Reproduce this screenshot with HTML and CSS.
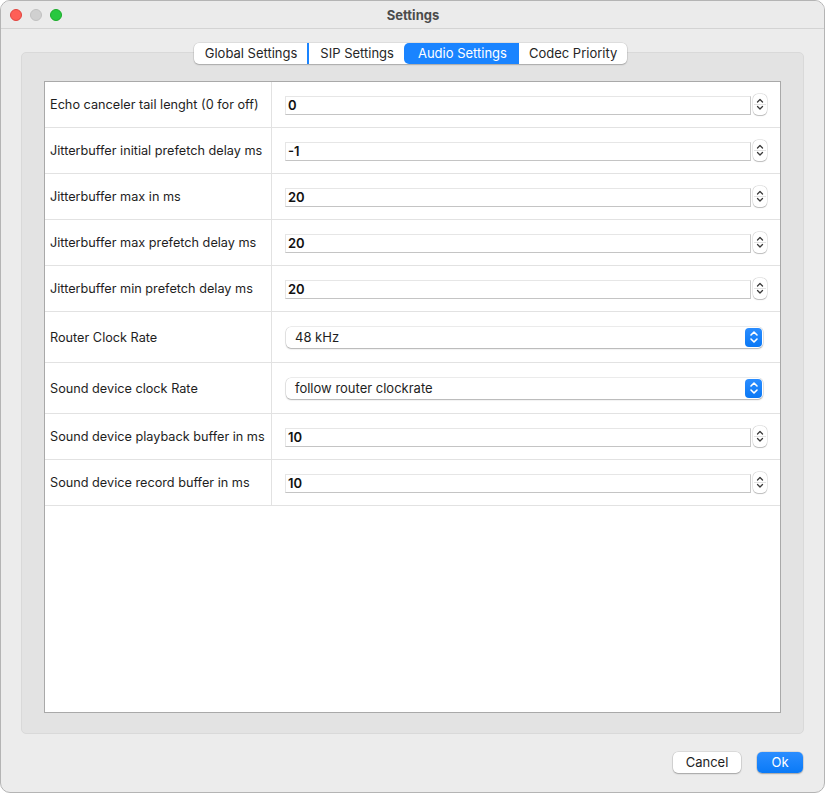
FILE: index.html
```html
<!DOCTYPE html>
<html>
<head>
<meta charset="utf-8">
<title>Settings</title>
<link rel="stylesheet" href="styles.css">
</head>
<body>
<div class="window">
  <div class="titlebar">
    <div class="lights">
      <span class="light red"></span>
      <span class="light grey"></span>
      <span class="light green"></span>
    </div>
    <div class="title">Settings</div>
    <div></div>
  </div>
  <div class="content">
    <div class="tabs">
      <div class="tab">Global Settings</div>
      <div class="tab mark">SIP Settings</div>
      <div class="tab active">Audio Settings</div>
      <div class="tab">Codec Priority</div>
    </div>
    <div class="group">
      <div class="table">
        <div class="row">
          <div class="label">Echo canceler tail lenght (0 for off)</div>
          <div class="cell"><div class="field">0</div><div class="stepper"><svg width="14" height="20" viewBox="0 0 14 20"><path d="M4.5 8 L7 5.5 L9.5 8" /><path d="M4.5 12.5 L7 15 L9.5 12.5" /></svg></div></div>
        </div>
        <div class="row">
          <div class="label">Jitterbuffer initial prefetch delay ms</div>
          <div class="cell"><div class="field">-1</div><div class="stepper"><svg width="14" height="20" viewBox="0 0 14 20"><path d="M4.5 8 L7 5.5 L9.5 8" /><path d="M4.5 12.5 L7 15 L9.5 12.5" /></svg></div></div>
        </div>
        <div class="row">
          <div class="label">Jitterbuffer max in ms</div>
          <div class="cell"><div class="field">20</div><div class="stepper"><svg width="14" height="20" viewBox="0 0 14 20"><path d="M4.5 8 L7 5.5 L9.5 8" /><path d="M4.5 12.5 L7 15 L9.5 12.5" /></svg></div></div>
        </div>
        <div class="row">
          <div class="label">Jitterbuffer max prefetch delay ms</div>
          <div class="cell"><div class="field">20</div><div class="stepper"><svg width="14" height="20" viewBox="0 0 14 20"><path d="M4.5 8 L7 5.5 L9.5 8" /><path d="M4.5 12.5 L7 15 L9.5 12.5" /></svg></div></div>
        </div>
        <div class="row">
          <div class="label">Jitterbuffer min prefetch delay ms</div>
          <div class="cell"><div class="field">20</div><div class="stepper"><svg width="14" height="20" viewBox="0 0 14 20"><path d="M4.5 8 L7 5.5 L9.5 8" /><path d="M4.5 12.5 L7 15 L9.5 12.5" /></svg></div></div>
        </div>
        <div class="row tall">
          <div class="label">Router Clock Rate</div>
          <div class="cell combo-cell"><div class="combo"><span>48 kHz</span><span class="combo-btn"><svg width="16" height="18" viewBox="0 0 16 18"><path d="M5 7 L8 4 L11 7" /><path d="M5 11 L8 14 L11 11" /></svg></span></div></div>
        </div>
        <div class="row tall">
          <div class="label">Sound device clock Rate</div>
          <div class="cell combo-cell"><div class="combo"><span>follow router clockrate</span><span class="combo-btn"><svg width="16" height="18" viewBox="0 0 16 18"><path d="M5 7 L8 4 L11 7" /><path d="M5 11 L8 14 L11 11" /></svg></span></div></div>
        </div>
        <div class="row">
          <div class="label">Sound device playback buffer in ms</div>
          <div class="cell"><div class="field">10</div><div class="stepper"><svg width="14" height="20" viewBox="0 0 14 20"><path d="M4.5 8 L7 5.5 L9.5 8" /><path d="M4.5 12.5 L7 15 L9.5 12.5" /></svg></div></div>
        </div>
        <div class="row">
          <div class="label">Sound device record buffer in ms</div>
          <div class="cell"><div class="field">10</div><div class="stepper"><svg width="14" height="20" viewBox="0 0 14 20"><path d="M4.5 8 L7 5.5 L9.5 8" /><path d="M4.5 12.5 L7 15 L9.5 12.5" /></svg></div></div>
        </div>
      </div>
    </div>
    <div class="buttons">
      <div class="btn">Cancel</div>
      <div class="btn primary">Ok</div>
    </div>
  </div>
</div>
</body>
</html>
```

FILE: styles.css
```css
* { box-sizing: border-box; }
html, body { margin: 0; padding: 0; background: #ffffff; }
body {
  font-family: "Inter", "Liberation Sans", sans-serif;
  font-size: 13px;
  color: #1e1e1e;
}
.window {
  width: 825px;
  height: 793px;
  background: #ececec;
  border: 1px solid #b4b4b4;
  border-radius: 10px;
  overflow: hidden;
  display: flex;
  flex-direction: column;
}
.titlebar {
  height: 28px;
  flex: none;
  display: grid;
  grid-template-columns: 1fr auto 1fr;
  align-items: center;
  border-bottom: 1px solid #d3d3d3;
  background: #ebebeb;
}
.lights {
  display: flex;
  gap: 8px;
  padding-left: 9px;
}
.light {
  width: 12px;
  height: 12px;
  border-radius: 50%;
  display: block;
}
.light.red { background: #fe5f57; border: 0.5px solid #e0443e; }
.light.grey { background: #d0d0d0; border: 0.5px solid #c0c0c0; }
.light.green { background: #28c840; border: 0.5px solid #1aab29; }
.title {
  font-weight: 700;
  color: #4b4b4b;
  font-size: 13px;
  padding-left: 1px;
}
.content {
  flex: 1;
  display: flex;
  flex-direction: column;
  padding: 0 20px 0 20px;
}
.tabs {
  align-self: center;
  margin-top: 14px;
  height: 21px;
  display: flex;
  background: #ffffff;
  border-radius: 5px;
  box-shadow: 0 0 0 0.5px rgba(0,0,0,0.12), 0 1px 1.5px rgba(0,0,0,0.22);
  position: relative;
  z-index: 1;
  margin-left: -4px;
}
.tab {
  height: 21px;
  line-height: 21px;
  padding: 0 10px;
  color: #262626;
  white-space: nowrap;
}
.tab:first-child { padding-left: 11px; }
.tab.mark {
  border-left: 2px solid #1a84ff;
  padding-left: 11px;
  background-clip: padding-box;
}
.tab.active {
  background: #1a84ff;
  color: #ffffff;
  border-radius: 5px 0 0 5px;
  padding: 0 12px 0 14px;
}
.tab:last-child { padding-right: 10px; }
.group {
  margin-top: -12px;
  height: 682px;
  flex: none;
  background: #e3e3e3;
  border: 1px solid #d9d9d9;
  border-radius: 5px;
  padding: 28px 22px 20px 22px;
  display: flex;
}
.table {
  flex: 1;
  background: #ffffff;
  border: 1px solid #a9a9a9;
  display: flex;
  flex-direction: column;
}
.row {
  display: flex;
  height: 46px;
  border-bottom: 1px solid #e2e2e2;
  flex: none;
}
.row.tall { height: 51px; }
.label {
  width: 227px;
  flex: none;
  border-right: 1px solid #e2e2e2;
  display: flex;
  align-items: center;
  padding-left: 5px;
  font-size: 12.7px;
  color: #1e1e1e;
  white-space: nowrap;
}
.cell {
  flex: 1;
  display: flex;
  align-items: center;
  padding: 0 13px 0 13px;
  gap: 2px;
}
.field {
  flex: 1;
  height: 19px;
  line-height: 17px;
  background: #ffffff;
  border: 1px solid #e6e6e6;
  border-bottom-color: #c4c4c4;
  border-right-color: #c8c8c8;
  padding-left: 2px;
  font-weight: 600;
  color: #111;
  margin-top: 1px;
}
.stepper {
  width: 14px;
  height: 21px;
  flex: none;
  border-radius: 5px;
  background: #fff;
  box-shadow: 0 0 0 0.5px rgba(0,0,0,0.14), 0 0.5px 1px rgba(0,0,0,0.2);
  display: flex;
  position: relative;
}
.stepper svg path {
  fill: none;
  stroke: #3a3a3a;
  stroke-width: 1.3;
  stroke-linecap: round;
  stroke-linejoin: round;
}
.stepper::after {
  content: "";
  position: absolute;
  left: 1px;
  right: 1px;
  top: 10px;
  height: 1px;
  background: #e4e4e4;
}
.combo-cell { padding: 0 17px 0 14px; }
.combo {
  flex: 1;
  height: 21px;
  border-radius: 5px;
  background: #ffffff;
  box-shadow: 0 0 0 0.5px rgba(0,0,0,0.15), 0 1px 1.5px rgba(0,0,0,0.25);
  display: flex;
  align-items: center;
  justify-content: space-between;
  padding: 0 1px 0 9px;
  color: #1e1e1e;
}
.combo-btn {
  width: 17px;
  height: 19px;
  border-radius: 4px;
  background: linear-gradient(#2a8dff, #0a78f5);
  display: flex;
  align-items: center;
  justify-content: center;
}
.combo-btn svg path {
  fill: none;
  stroke: #ffffff;
  stroke-width: 1.6;
  stroke-linecap: round;
  stroke-linejoin: round;
}
.buttons {
  margin-top: 18px;
  display: flex;
  justify-content: flex-end;
  gap: 16px;
  padding-right: 1px;
}
.btn {
  height: 21px;
  line-height: 21px;
  width: 68px;
  text-align: center;
  background: #ffffff;
  border-radius: 5px;
  box-shadow: 0 0 0 0.5px rgba(0,0,0,0.14), 0 1px 1.5px rgba(0,0,0,0.25);
  color: #1e1e1e;
}
.btn.primary {
  width: 46px;
  background: linear-gradient(#2a8dff, #0a7af7);
  color: #ffffff;
}
```
